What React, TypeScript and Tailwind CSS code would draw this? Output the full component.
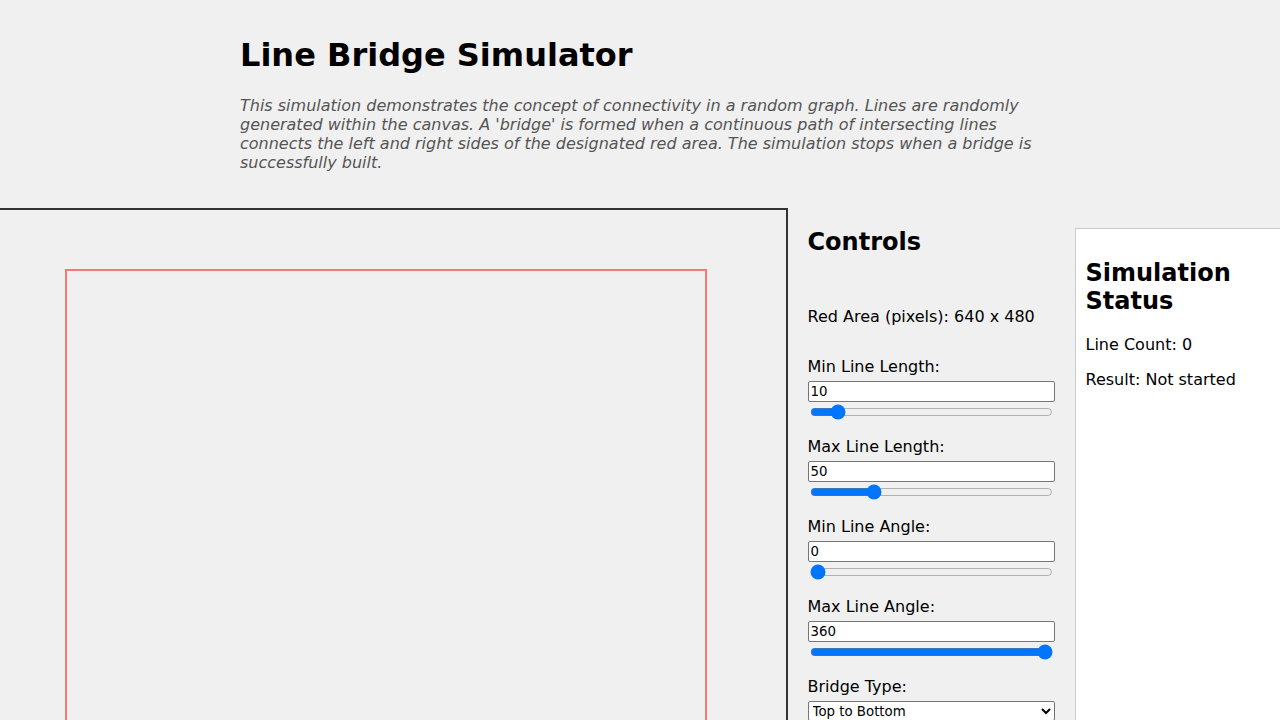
import React, { useState } from "react";

function SliderGroup({
  label,
  value,
  min,
  max,
  onChange,
}: {
  label: string;
  value: number;
  min: number;
  max: number;
  onChange: (v: number) => void;
}) {
  return (
    <div className="mb-[17px]">
      <label className="mb-[5px] block text-[16px] leading-[19px]">{label}</label>
      <input
        type="text"
        value={value}
        onChange={(e) => onChange(Number(e.target.value) || 0)}
        className="block h-[21px] w-full rounded-[2px] border border-[#767676] bg-white px-[2px] text-[13.33px] leading-[15px]"
      />
      <input
        type="range"
        min={min}
        max={max}
        value={value}
        onChange={(e) => onChange(Number(e.target.value))}
        className="mx-[2px] my-[2px] block h-[16px] w-[243px]"
      />
    </div>
  );
}

export default function App() {
  const [minLen, setMinLen] = useState(10);
  const [maxLen, setMaxLen] = useState(50);
  const [minAngle, setMinAngle] = useState(0);
  const [maxAngle, setMaxAngle] = useState(360);

  return (
    <div className="h-screen overflow-hidden bg-[#f0f0f0] font-['DejaVu_Sans',sans-serif] text-black">
      {/* Header */}
      <header className="mx-auto w-[800px] pt-[37px]">
        <h1 className="text-[32px] font-bold leading-[37px]">Line Bridge Simulator</h1>
        <p className="mt-[22px] text-[16px] italic leading-[19px] text-[#555]">
          This simulation demonstrates the concept of connectivity in a random graph. Lines are randomly
          generated within the canvas. A 'bridge' is formed when a continuous path of intersecting lines
          connects the left and right sides of the designated red area. The simulation stops when a bridge is
          successfully built.
        </p>
      </header>

      <div className="mt-[36px] flex justify-center">
        {/* Canvas */}
        <div className="h-[604px] w-[804px] shrink-0 border-2 border-[#333] pl-[79px] pt-[59px]">
          <div className="h-[482px] w-[642px] border-2 border-[#f77878]" />
        </div>

        {/* Controls */}
        <div className="w-[287px] shrink-0 px-5 pt-[20px]">
          <h2 className="text-[24px] font-bold leading-[28px]">Controls</h2>
          <p className="mt-[51px] text-[16px] leading-[19px]">Red Area (pixels): 640 x 480</p>
          <div className="mt-[31px]">
            <SliderGroup label="Min Line Length:" value={minLen} min={1} max={100} onChange={setMinLen} />
            <SliderGroup label="Max Line Length:" value={maxLen} min={0} max={200} onChange={setMaxLen} />
            <SliderGroup label="Min Line Angle:" value={minAngle} min={0} max={360} onChange={setMinAngle} />
            <SliderGroup label="Max Line Angle:" value={maxAngle} min={0} max={360} onChange={setMaxAngle} />
            <div className="mb-[17px]">
              <label className="mb-[5px] block text-[16px] leading-[19px]">Bridge Type:</label>
              <select className="block h-[20px] w-full rounded-[2px] border border-[#767676] bg-white text-[13.33px]">
                <option>Top to Bottom</option>
                <option>Left to Right</option>
              </select>
            </div>
          </div>
        </div>

        {/* Status */}
        <div className="mt-5 w-[222px] shrink-0 border border-[#ccc] bg-white p-[10px]">
          <h2 className="mt-[20px] text-[24px] font-bold leading-[28px]">Simulation Status</h2>
          <p className="mt-[20px] text-[16px] leading-[19px]">Line Count: 0</p>
          <p className="mt-[16px] text-[16px] leading-[19px]">Result: Not started</p>
        </div>
      </div>
    </div>
  );
}
